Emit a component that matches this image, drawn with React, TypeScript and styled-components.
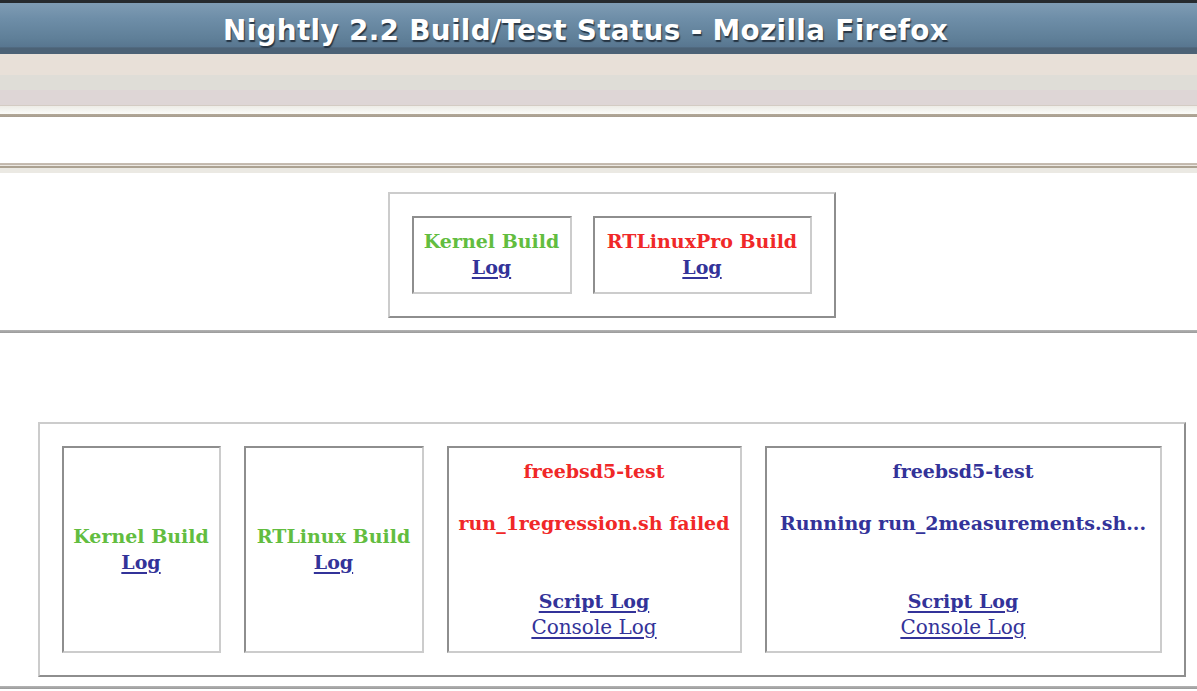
import React from "react";
import styled, { createGlobalStyle } from "styled-components";

const Global = createGlobalStyle`
  html, body { margin: 0; padding: 0; background: #ffffff; }
  body { width: 1197px; height: 691px; overflow: hidden; }
  #root { width: 1197px; height: 691px; }
`;

const Window = styled.div`
  width: 1197px;
  height: 691px;
  display: flex;
  flex-direction: column;
  overflow: hidden;
  background: #ffffff;
`;

const TitleBar = styled.div`
  box-sizing: border-box;
  height: 54px;
  border-top: 3px solid #262a2e;
  background: linear-gradient(
    #7f9cb4 0%,
    #6e8ea8 30%,
    #5f7f98 70%,
    #587690 86%,
    #4c6276 88%,
    #4c6276 100%
  );
  display: flex;
  align-items: center;
  justify-content: center;
  padding: 4px 26px 0 0;
`;

const Title = styled.h1`
  margin: 0;
  font-family: "DejaVu Sans", "Liberation Sans", sans-serif;
  font-weight: bold;
  font-size: 27.8px;
  letter-spacing: 0.35px;
  line-height: 32px;
  color: #ffffff;
  text-shadow: 1px 2px 1px rgba(20, 30, 40, 0.75);
`;

const MenuArea = styled.div`
  height: 51px;
  background: linear-gradient(
    #e8e0d8 0px,
    #e8e0d8 21px,
    #dfddd7 21px,
    #dfddd7 36px,
    #ded6d6 36px,
    #ded6d6 51px
  );
`;

const Separator = styled.div<{ $variant: "top" | "bottom" }>`
  height: ${(p) => (p.$variant === "top" ? 12 : 10)}px;
  background: ${(p) =>
    p.$variant === "top"
      ? "linear-gradient(#d4ccc4 0px, #d4ccc4 1px, #eeece6 1px, #f4f4f0 5px, #fbfbf8 9px, #b2a898 9px, #a89e90 12px)"
      : "linear-gradient(#c8beb4 0px, #c0b6aa 2px, #ece8e2 2px, #ece8e2 3px, #aca292 3px, #aca292 5px, #ebe9e3 5px, #ebe9e3 10px)"};
`;

const ToolbarSpace = styled.div`
  height: 46px;
  background: #ffffff;
`;

const Content = styled.div`
  flex: 1;
  display: flex;
  flex-direction: column;
  background: #ffffff;
  font-family: "DejaVu Serif", "Liberation Serif", serif;
  font-size: 19px;
  line-height: 26px;
`;

const Section = styled.div<{ $top: number }>`
  display: flex;
  justify-content: center;
  padding: ${(p) => p.$top}px 0 0 26px;
`;

const Rule = styled.div<{ $top: number }>`
  margin-top: ${(p) => p.$top}px;
  height: 3px;
  background: linear-gradient(#b4b4b4, #9a9a9a);
  flex-shrink: 0;
`;

const OuterBox = styled.div<{ $gap: number }>`
  display: flex;
  gap: ${(p) => p.$gap}px;
  padding: 22px;
  border: 2px solid;
  border-color: #cccccc #8e8e8e #8e8e8e #cccccc;
  background: #ffffff;
`;

const Cell = styled.div<{ $w: number; $h: number }>`
  box-sizing: border-box;
  width: ${(p) => p.$w}px;
  height: ${(p) => p.$h}px;
  border: 2px solid;
  border-color: #8e8e8e #cccccc #cccccc #8e8e8e;
  display: flex;
  flex-direction: column;
  justify-content: center;
  align-items: center;
  text-align: center;
  white-space: nowrap;
  padding-bottom: 2px;
`;

const Status = styled.div<{ $color: string }>`
  font-weight: bold;
  color: ${(p) => p.$color};
  height: 26px;
`;

const Blank = styled.div<{ $lines: number }>`
  height: ${(p) => p.$lines * 26}px;
`;

const LogLink = styled.a<{ $bold?: boolean }>`
  color: #333399;
  font-weight: ${(p) => (p.$bold ? "bold" : "normal")};
  font-size: ${(p) => (p.$bold ? 19 : 20)}px;
  text-decoration: underline;
  text-decoration-thickness: 2px;
  text-underline-offset: 3px;
  height: 26px;
  cursor: pointer;
`;

const GREEN = "#62bd40";
const RED = "#f02828";
const BLUE = "#333399";

export default function App() {
  return (
    <Window>
      <Global />
      <TitleBar>
        <Title>Nightly 2.2 Build/Test Status - Mozilla Firefox</Title>
      </TitleBar>
      <MenuArea />
      <Separator $variant="top" />
      <ToolbarSpace />
      <Separator $variant="bottom" />
      <Content>
        <Section $top={19}>
          <OuterBox $gap={21}>
            <Cell $w={160} $h={78}>
              <Status $color={GREEN}>Kernel Build</Status>
              <LogLink $bold>Log</LogLink>
            </Cell>
            <Cell $w={219} $h={78}>
              <Status $color={RED}>RTLinuxPro Build</Status>
              <LogLink $bold>Log</LogLink>
            </Cell>
          </OuterBox>
        </Section>
        <Rule $top={12} />
        <Section $top={89}>
          <OuterBox $gap={23}>
            <Cell $w={159} $h={207}>
              <Status $color={GREEN}>Kernel Build</Status>
              <LogLink $bold>Log</LogLink>
            </Cell>
            <Cell $w={180} $h={207}>
              <Status $color={GREEN}>RTLinux Build</Status>
              <LogLink $bold>Log</LogLink>
            </Cell>
            <Cell $w={295} $h={207}>
              <Status $color={RED}>freebsd5-test</Status>
              <Blank $lines={1} />
              <Status $color={RED}>run_1regression.sh failed</Status>
              <Blank $lines={2} />
              <LogLink $bold>Script Log</LogLink>
              <LogLink>Console Log</LogLink>
            </Cell>
            <Cell $w={397} $h={207}>
              <Status $color={BLUE}>freebsd5-test</Status>
              <Blank $lines={1} />
              <Status $color={BLUE}>Running run_2measurements.sh...</Status>
              <Blank $lines={2} />
              <LogLink $bold>Script Log</LogLink>
              <LogLink>Console Log</LogLink>
            </Cell>
          </OuterBox>
        </Section>
        <Rule $top={9} />
      </Content>
    </Window>
  );
}
